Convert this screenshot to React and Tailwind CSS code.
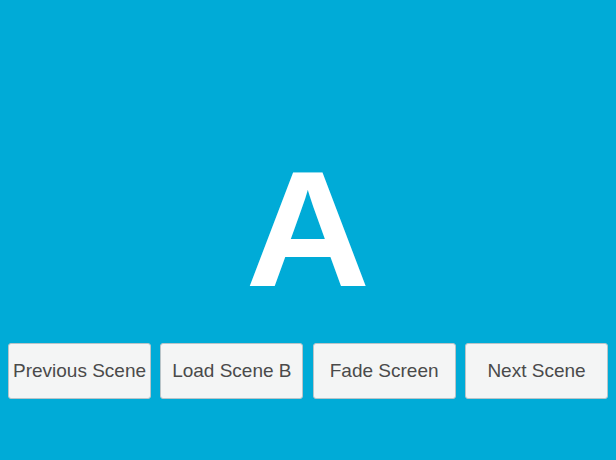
export default function App() {
  const buttons = ["Previous Scene", "Load Scene B", "Fade Screen", "Next Scene"];
  return (
    <div className="w-[616px] h-[460px] bg-[#00abd7] flex flex-col overflow-hidden" style={{ fontFamily: '"Liberation Sans", Arial, sans-serif' }}>
      <div className="pt-[146px] h-[312px] text-center text-white font-bold text-[166px] leading-none">
        <span className="inline-block scale-x-[1.04]">A</span>
      </div>
      <div className="mt-[31px] px-2 grid grid-cols-4 gap-[9.33px]">
        {buttons.map((b) => (
          <button
            key={b}
            className="h-[56px] rounded-[3px] bg-[#f4f5f5] border border-[#b9c4c8] text-[#4a4a4a] text-[19px] pt-[1px] flex items-center justify-center whitespace-nowrap"
          >
            {b}
          </button>
        ))}
      </div>
    </div>
  );
}
